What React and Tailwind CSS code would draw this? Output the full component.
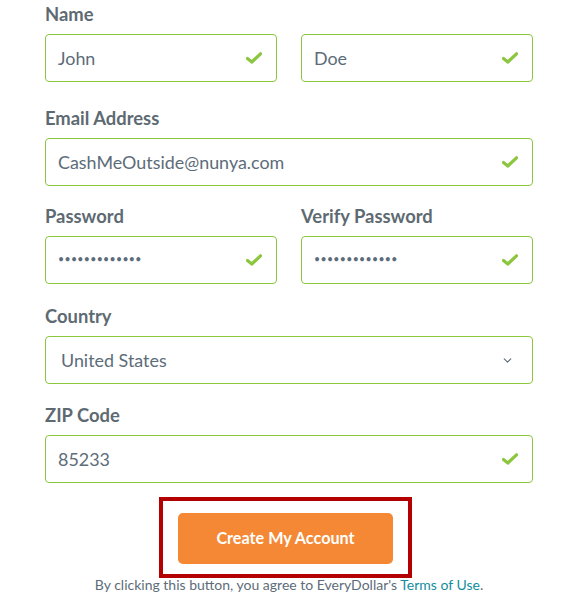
import { ChevronDown } from "lucide-react";

const FONT = { fontFamily: "Lato, 'Open Sans', 'Liberation Sans', sans-serif" };

function Check() {
  return (
    <svg width="16" height="12" viewBox="0 0 16 12" className="shrink-0">
      <path d="M1.5 6.5 L5.8 10 L14.5 1.8" fill="none" stroke="#8cc63f" strokeWidth="3.2" strokeLinecap="round" strokeLinejoin="round" />
    </svg>
  );
}

function Label({ children }) {
  return (
    <div className="text-[18.4px] font-bold leading-[20px] text-[#5e6a72] mb-[10px]">
      {children}
    </div>
  );
}

function Field({ label, value, password }) {
  return (
    <div className="flex-1">
      <Label>{label}</Label>
      <div className="h-[48px] border border-[#8cc63f] rounded-[4px] flex items-center justify-between pl-[12px] pr-[14px]">
        {password ? (
          <span className="text-[10.5px] tracking-[0.35px] text-[#5d6c79]">{value}</span>
        ) : (
          <span className="text-[17.9px] leading-[22px] text-[#5d6c79]">{value}</span>
        )}
        <Check />
      </div>
    </div>
  );
}

export default function App() {
  return (
    <div className="w-[578px] h-[600px] bg-white px-[45px] pt-[4px]" style={FONT}>
      <div className="flex gap-[24px]">
        <Field label="Name" value="John" />
        <Field label={<span className="invisible">x</span>} value="Doe" />
      </div>
      <div className="mt-[26px]">
        <Field label="Email Address" value="CashMeOutside@nunya.com" />
      </div>
      <div className="flex gap-[24px] mt-[20px]">
        <Field label="Password" value="•••••••••••••" password />
        <Field label="Verify Password" value="•••••••••••••" password />
      </div>
      <div className="mt-[22px]">
        <Label>Country</Label>
        <div className="h-[48px] border border-[#8cc63f] rounded-[4px] flex items-center justify-between pl-[15px] pr-[18px]">
          <span className="text-[17.9px] leading-[22px] text-[#5d6c79]">United States</span>
          <ChevronDown size={13} strokeWidth={2} color="#5d6c79" />
        </div>
      </div>
      <div className="mt-[21px]">
        <Field label="ZIP Code" value="85233" />
      </div>
      <div className="flex mt-[14px] ml-[114px]">
        <div className="border-4 border-[#b30000] pt-[12px] pb-[10px] px-[15px]">
          <button className="w-[215px] h-[51px] rounded-[5px] bg-[#f48835] text-white font-bold text-[16.2px]">
            Create My Account
          </button>
        </div>
      </div>
      <p className="text-center text-[14px] leading-[18px] text-[#5d6c79] mt-[-2px]">
        By clicking this button, you agree to EveryDollar's{" "}
        <span className="text-[#138d9e]">Terms of Use</span>.
      </p>
    </div>
  );
}
